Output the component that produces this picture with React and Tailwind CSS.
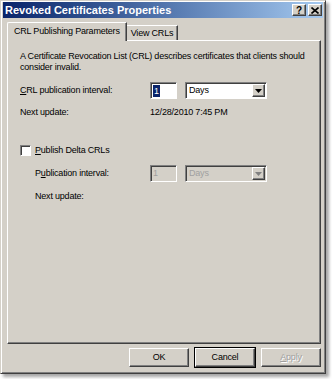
import React from 'react';

const raised = 'border border-t-white border-l-white border-r-[#404040] border-b-[#404040] shadow-[inset_-1px_-1px_0_#808080]';
const sunken = 'border border-t-[#808080] border-l-[#808080] border-r-white border-b-white shadow-[inset_1px_1px_0_#404040]';

const DownArrow = ({ disabled }) => (
    <svg width="7" height="4" viewBox="0 0 7 4">
        <path d="M0 0h7L3.5 4z" fill={disabled ? '#808080' : '#000'} />
    </svg>
);

const Combo = ({ value, disabled }) => (
    <div className={`w-[82px] h-[17px] flex items-center ${sunken} ${disabled ? 'bg-[#d4d0c8]' : 'bg-white'}`}>
        <span className={`flex-1 pl-[3px] ${disabled ? 'text-[#a0a0a0]' : 'text-black'}`}>{value}</span>
        <div className={`w-[13px] h-[13px] mr-[1px] bg-[#d4d0c8] flex items-center justify-center ${raised}`}>
            <DownArrow disabled={disabled} />
        </div>
    </div>
);

const NumBox = ({ value, disabled }) => (
    <div className={`w-[27px] h-[17px] flex items-center pl-[2px] ${sunken} ${disabled ? 'bg-[#d4d0c8]' : 'bg-white'}`}>
        {disabled
            ? <span className="text-[#a0a0a0]">{value}</span>
            : <span className="bg-[#0a246a] text-white px-[1px] leading-[12px]">{value}</span>}
    </div>
);

const Btn = ({ children, def, disabled }) => (
    <div className={`w-[60px] h-[19px] flex items-center justify-center bg-[#d4d0c8] ${def ? 'outline outline-1 outline-black' : ''} ${raised}`}>
        <span className={disabled ? 'text-[#a0a0a0] [text-shadow:1px_1px_0_#fff]' : 'text-black'}>{children}</span>
    </div>
);

export default function App() {
    return (
        <div className="w-[332px] h-[379px] bg-white text-[9px] leading-[11px] tracking-[-0.2px] text-black" style={{ fontFamily: '"Liberation Sans", Arial, sans-serif' }}>
            <div className="w-[326px] h-[374px] bg-[#d4d0c8] border border-t-[#d4d0c8] border-l-[#d4d0c8] border-r-[#404040] border-b-[#404040] shadow-[inset_1px_1px_0_#fff,inset_-1px_-1px_0_#808080,3px_3px_3px_rgba(0,0,0,0.35)] pt-[1px] px-[2px] flex flex-col">
                {/* title bar */}
                <div className="h-[16px] flex items-center justify-between pl-[2px] pr-[1px] bg-gradient-to-r from-[#0a246a] to-[#a6caf0]">
                    <span className="text-white font-bold text-[11px] tracking-normal">Revoked Certificates Properties</span>
                    <div className="flex gap-[2px]">
                        <div className={`w-[14px] h-[12px] bg-[#d4d0c8] flex items-center justify-center font-bold text-[10px] ${raised}`}>?</div>
                        <div className={`w-[14px] h-[12px] bg-[#d4d0c8] flex items-center justify-center ${raised}`}>
                            <svg width="8" height="7" viewBox="0 0 8 7"><path d="M0.5 0.5l7 6M7.5 0.5l-7 6" stroke="#000" strokeWidth="1.6" /></svg>
                        </div>
                    </div>
                </div>

                {/* tabs */}
                <div className="flex items-end pl-[4px] mt-[4px] h-[18px]">
                    <div className="h-[19px] px-[6px] pt-[3px] border-t border-l border-t-white border-l-white border-r border-r-[#404040] shadow-[inset_-1px_0_0_#808080] bg-[#d4d0c8] rounded-tl-[2px] relative z-10 mb-[-1px]">
                        CRL Publishing Parameters
                    </div>
                    <div className="h-[15px] px-[4px] pt-[2px] border-t border-t-white border-r border-r-[#404040] shadow-[inset_-1px_0_0_#808080]">
                        View CRLs
                    </div>
                </div>

                {/* panel */}
                <div className="ml-[4px] mr-[2px] h-[304px] border border-t-white border-l-white border-r-[#404040] border-b-[#404040] shadow-[inset_-1px_-1px_0_#808080] px-[12px] pt-[10px] flex flex-col">
                    <p className="w-[292px]">A Certificate Revocation List (CRL) describes certificates that clients should consider invalid.</p>

                    <div className="flex items-center mt-[9px]">
                        <span className="w-[130px]"><u>C</u>RL publication interval:</span>
                        <NumBox value="1" />
                        <div className="ml-[8px]"><Combo value="Days" /></div>
                    </div>
                    <div className="flex mt-[8px]">
                        <span className="w-[130px]">Next update:</span>
                        <span>12/28/2010 7:45 PM</span>
                    </div>

                    <div className="flex items-center mt-[27px]">
                        <div className="w-[11px] h-[11px] bg-white border border-t-[#808080] border-l-[#808080] border-r-white border-b-white shadow-[inset_1px_1px_0_#404040]" />
                        <span className="ml-[4px]"><u>P</u>ublish Delta CRLs</span>
                    </div>
                    <div className="flex items-center mt-[9px] pl-[15px]">
                        <span className="w-[115px]">P<u>u</u>blication interval:</span>
                        <NumBox value="1" disabled />
                        <div className="ml-[8px]"><Combo value="Days" disabled /></div>
                    </div>
                    <div className="flex mt-[9px] pl-[15px]">
                        <span>Next update:</span>
                    </div>
                </div>

                {/* buttons */}
                <div className="flex justify-end gap-[6px] mr-[2px] mt-[4px]">
                    <Btn>OK</Btn>
                    <Btn def>Cancel</Btn>
                    <Btn disabled><u>A</u>pply</Btn>
                </div>
            </div>
        </div>
    );
}
